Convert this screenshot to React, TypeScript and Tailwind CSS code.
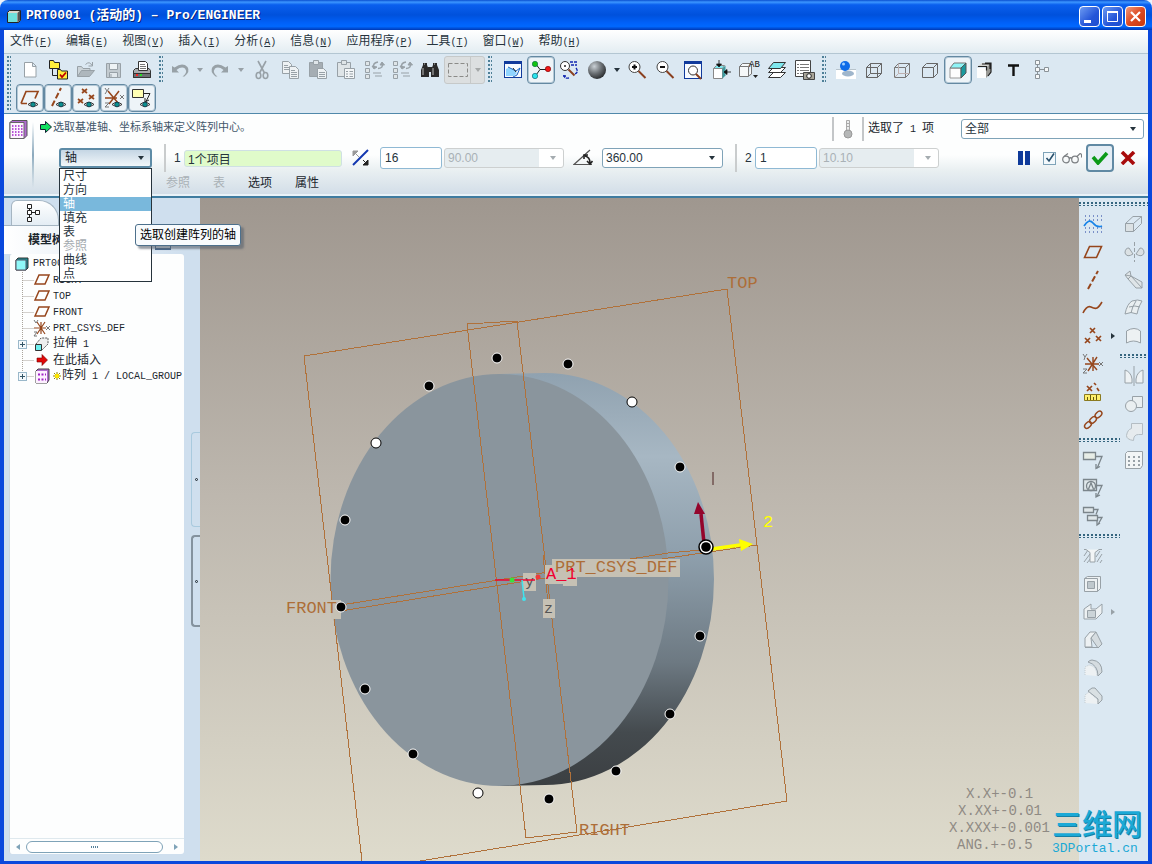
import type { ReactNode } from "react";

const SANS = "font-['Liberation_Sans','Noto_Sans_CJK_SC',sans-serif]";
const MONO = "font-['Liberation_Mono','Noto_Sans_CJK_SC',monospace]";

const G = "#98a1a7";
const BR = "#96461c";

/* ---------- icon drawings, each on a 20 x 20 grid ---------- */

const pencilEye = (
  <g>
    <path d="M8 16.500Q13 12 18 16.500Q13 20 8 16.500Z" fill="#fff" stroke="#333" strokeWidth="1" />
    <circle cx="13" cy="16.500" r="2.400" fill="#0c8f8f" stroke="#123" strokeWidth=".7" />
  </g>
);

const cube = (stroke: string, hidden: ReactNode, fill = "none") => (
  <g stroke={stroke} fill={fill} strokeWidth="1" strokeLinejoin="round">
    <path d="M2.500 7.500h11v10h-11zM2.500 7.500l4-4h11l-4 4M17.500 3.500v10l-4 4" />
    {hidden}
  </g>
);

const icons: Record<string, ReactNode> = {
  newFile: <path d="M4.500 2.500h8l3.500 3.500v11h-11.500zM12.500 2.500v4h3.500" fill="#fff" stroke={G} />,
  workDir: (
    <g stroke="#222">
      <path d="M1.500.5h4l1 2h5v6h-10z" fill="#ffee3c" />
      <path d="M4.500 9v6.500h5" fill="none" />
      <path d="M9.500 9.500h3l1 1.500h6v8h-10z" fill="#ffee3c" />
      <path d="M12 14.500l2 2.500 4-4.500" fill="none" stroke="#c00000" strokeWidth="1.800" />
    </g>
  ),
  open: (
    <g stroke={G} fill="#cbd3d8">
      <path d="M1.500 16.500v-10h4l1.500 2h7v3" />
      <path d="M1.500 16.500l4-6h13l-5 6z" fill="#aeb7bd" />
      <path d="M9.500 4.500q4-4 6.500 1M16.500 2v4h-4" fill="none" />
    </g>
  ),
  save: (
    <g stroke={G} fill="#c3cbd0">
      <path d="M2.500 3.500h14v14h-14z" />
      <path d="M5.500 3.500h8v6h-8z" fill="#eef3f5" />
      <path d="M5.500 12.500h8v5h-8z" fill="#e2e8ec" />
      <path d="M7 14v3" />
    </g>
  ),
  print: (
    <g stroke="#333">
      <path d="M6.500 10V1.500h7l2 2V10" fill="#fff" />
      <path d="M8 4.500h5M8 6.500h6M8 8.500h6" stroke="#777" />
      <path d="M1.500 10.500l2-2h3v2h9v-2h1.500l1.500 2v7h-17z" fill="#a8aaac" />
      <path d="M1.500 13.500h17v4h-17z" fill="#6d7073" />
      <path d="M4 15h2" stroke="#f22" strokeWidth="2" />
      <path d="M8 15h2" stroke="#2d2" strokeWidth="2" />
    </g>
  ),
  undo: <path d="M2 6v6.500h7L6.500 10q5-4 8.500-1.500 3 4-2.500 8h2q6-5 3-9.500-5-5-13 .5z" fill={G} />,
  redo: <path d="M18 6v6.500h-7l2.500-2.500q-5-4-8.500-1.500-3 4 2.500 8h-2q-6-5-3-9.500 5-5 13 .5z" fill={G} />,
  cut: (
    <g fill="none" stroke={G} strokeWidth="1.600">
      <path d="M6 1l6.500 12M14 1L7.500 13" />
      <ellipse cx="6.500" cy="15.500" rx="2.300" ry="3" />
      <ellipse cx="13.500" cy="15.500" rx="2.300" ry="3" />
    </g>
  ),
  copy: (
    <g stroke={G} fill="#eef2f4">
      <path d="M2.500 1.500h6l3 3v9h-9z" />
      <path d="M4 5.500h4M4 7.500h5M4 9.500h5" />
      <path d="M9.500 6.500h6l3 3v9h-9z" />
      <path d="M11 10.500h4M11 12.500h6M11 14.500h6M11 16.500h6" />
    </g>
  ),
  paste: (
    <g stroke={G} fill="#a5adb3">
      <path d="M1.500 2.500h13v14h-13z" />
      <path d="M5.500.5h5v4h-5z" fill="#dfe5e9" />
      <path d="M9.500 8.500h6l3 3v7h-9z" fill="#eef2f4" />
      <path d="M11 12.500h6M11 14.500h6M11 16.500h6" />
    </g>
  ),
  pasteSpecial: (
    <g stroke={G} fill="#dfe5e8">
      <path d="M1.500 2.500h13v14h-13z" />
      <path d="M5.500.5h5v4h-5z" />
      <path d="M8.500 8.500h10v10h-10z" fill="#f3f6f8" />
      <path d="M10 11.500h2M13.500 11.500h3.500M10 14h2M13.500 14h3.500M10 16.500h2M13.500 16.500h3.500" />
    </g>
  ),
  regen: (
    <g stroke={G} fill="none">
      <path d="M1.500 1.500h4v4h-4zM1.500 8.500h4v4h-4zM1.500 14.500h4v4h-4z" fill="#dfe5e8" />
      <path d="M10 8q-2-5 4-6M18 3q2 5-4 5.500" strokeWidth="1.500" />
      <path d="M8 6l2 3 3-2zM16 5l2-3 2.500 3z" fill={G} />
      <path d="M9 13h8M11 16h7" />
    </g>
  ),
  find: (
    <g fill="#2a2a2a">
      <path d="M3 3h4v2l2 5v7H1v-7l2-5zM13 3h4v2l2 5v7h-8v-7l2-5z" />
      <path d="M8 7h4v5H8z" />
      <path d="M3 8v7M13 8v7M4 4h1M14 4h1" stroke="#bbb" />
    </g>
  ),
  selectBox: <path d="M.5 3.500h19v13H.5z" fill="none" stroke="#8b8b88" strokeDasharray="4 2" />,
  repaint: (
    <g>
      <rect x="1" y="1" width="18" height="17" fill="#103a9c" />
      <rect x="2" y="4" width="16" height="13" fill="#f6fbff" />
      <path d="M3 16V9q5-3 11 4l-3 3z" fill="#8fd4ff" />
      <path d="M5 7l8 4 4-3-3 7-4 2" fill="none" stroke="#1864c4" />
      <path d="M10 8l3 4" stroke="#222" />
    </g>
  ),
  datumPoints: (
    <g>
      <path d="M4 3l5 6.500-5 7M9 9.500h8" fill="none" stroke="#222" />
      <circle cx="4" cy="4" r="2.700" fill="#12c312" stroke="#064" strokeWidth=".6" />
      <circle cx="17" cy="9" r="2.700" fill="#f01818" stroke="#700" strokeWidth=".6" />
      <circle cx="4" cy="16" r="2.700" fill="#2ce4ec" stroke="#056" strokeWidth=".6" />
    </g>
  ),
  orient: (
    <g fill="none">
      <circle cx="6" cy="6" r="4.500" fill="#fff" stroke="#333" />
      <circle cx="6" cy="6" r="1" fill="#222" />
      <path d="M9.500 9.500l6 6" stroke="#8a4020" strokeWidth="2" />
      <path d="M11 2h7M12 5h6M17 8q3 4-1 6M10 18q-5 1-5-3M4 16h3" stroke="#1226b0" strokeWidth="1.300" strokeDasharray="3 1" />
    </g>
  ),
  sphere: <circle cx="10" cy="10" r="9" fill="url(#ball)" />,
  zoomIn: (
    <g fill="none">
      <circle cx="7.500" cy="7" r="5.500" fill="#fff" stroke="#444" />
      <path d="M5 7h5M7.500 4.500v5" stroke="#111" strokeWidth="2" />
      <path d="M11.500 11l7 7" stroke="#8a4020" strokeWidth="2" />
    </g>
  ),
  zoomOut: (
    <g fill="none">
      <circle cx="7.500" cy="7" r="5.500" fill="#fff" stroke="#444" />
      <path d="M5 7h5" stroke="#111" strokeWidth="2" />
      <path d="M11.500 11l7 7" stroke="#8a4020" strokeWidth="2" />
    </g>
  ),
  refit: (
    <g>
      <rect x="1" y="1" width="18" height="18" fill="#103a9c" />
      <rect x="2" y="4" width="16" height="14" fill="#f8fbff" />
      <circle cx="10" cy="10.500" r="4.500" fill="#fff" stroke="#333" />
      <path d="M13 14l5 5" stroke="#8a4020" strokeWidth="2" />
    </g>
  ),
  reorient: (
    <g>
      <path d="M2.500 8.500h9v10h-9z" fill="#fff" stroke="#888" />
      <path d="M2.500 8.500l3-3h8l-2 3z" fill="#7fe8ee" stroke="#888" />
      <path d="M11.500 8.500l3-3v10l-3 3z" fill="#3e9a9e" />
      <path d="M8 0v6M5.500 4L8 7l2.500-3zM20 12h-6M16 9.500L13 12l3 2.500z" stroke="#111" strokeWidth=".8" fill="#111" />
    </g>
  ),
  savedView: (
    <g>
      <path d="M.5 6.500h9v10h-9zM.5 6.500l3-3h8l-2 3M12.500 4v10l-3 2" fill="#f6f8f9" stroke="#777" />
      <path d="M14 15h5l-2.500 3z" fill="#222" />
      <text x="10" y="7" fontSize="9" fontFamily="Liberation Mono" fill="#111">AB</text>
    </g>
  ),
  layers: (
    <g stroke="#333">
      <path d="M1.500 17.500l5-5h12l-5 5z" fill="#fff" />
      <path d="M1.500 12.500l5-5h12l-5 5z" fill="#fff" />
      <path d="M1.500 8.500l5-6h12l-5 6z" fill="#7fe8ee" />
    </g>
  ),
  viewMgr: (
    <g stroke="#444">
      <path d="M.5.500h15v16H.5z" fill="#fff" />
      <path d="M2 4.500h2M5 4.500h9M2 7.500h2M5 7.500h9M2 10.500h2M5 10.500h9M2 13.500h2M5 13.500h5" stroke="#777" />
      <path d="M8.500 12.500h11v7h-11z" fill="#a8a498" />
      <circle cx="14" cy="16" r="2.300" fill="#fff" stroke="#222" />
    </g>
  ),
  spin: (
    <g>
      <rect y="9" width="20" height="10" fill="#fff" />
      <path d="M0 9.500h20" stroke="#b8c4cc" />
      <ellipse cx="12" cy="13.500" rx="6" ry="3" fill="#9fb6cc" />
      <circle cx="9" cy="6" r="5" fill="#0d6be8" />
      <circle cx="7.500" cy="4" r="1.500" fill="#9fd0ff" />
    </g>
  ),
  wire: cube("#666", <path d="M6.500 3.500v10h11M6.500 13.500l-4 4" />),
  hidden: cube("#777", <path d="M6.500 3.500v10h11M6.500 13.500l-4 4" stroke="#bdb0b0" />),
  noHidden: cube("#666", null),
  shaded: (
    <g>
      <path d="M2 8h11v10H2z" fill="#fdfdfd" stroke="#999" />
      <path d="M2 8l4-5h12l-5 5z" fill="#8ff4f6" stroke="#777" />
      <path d="M13 8l5-5v10l-5 5z" fill="#1b9a9e" stroke="#555" />
    </g>
  ),
  enhanced: (
    <g>
      <path d="M1 8h9v10H1z" fill="#fdfdfd" />
      <path d="M1 7l5-4h9l-4 4z" fill="#d4d4d0" />
      <path d="M10 8l5-5v10l-5 5z" fill="#9a9a96" />
      <path d="M2 6.500h8.500v4M6 4h8v5M9 3h6v9l-3 4" fill="none" stroke="#222" strokeWidth="1.200" />
    </g>
  ),
  textT: <path d="M4 5.500h11M9.500 5.500V16" stroke="#111" strokeWidth="2.400" fill="none" />,
  treeIcon: (
    <g stroke="#8a9298" fill="#f6f8f9">
      <path d="M5.500 5v10M5.500 9.500h8" />
      <path d="M3.500.5h4v4h-4zM3.500 7.500h4v4h-4zM3.500 14.500h4v4h-4zM12.500 7.500h4v4h-4z" />
    </g>
  ),
  eyePlane: (
    <g>
      <path d="M1 15.500L6 3.500h12l-3 7M1 15.500h6" fill="none" stroke={BR} strokeWidth="1.700" />
      {pencilEye}
    </g>
  ),
  eyeAxis: (
    <g>
      <path d="M4 18L13 0" stroke={BR} strokeWidth="2" strokeDasharray="6 2.500" />
      {pencilEye}
    </g>
  ),
  eyePoint: (
    <g>
      <path d="M6 1l5 4M11 1L6 5M2 11l5 4M7 11l-5 4M13 7l5 4M18 7l-5 4" stroke={BR} strokeWidth="1.700" />
      {pencilEye}
    </g>
  ),
  eyeCsys: (
    <g>
      <path d="M4 3l10 12M15 3L5 16M1 10h12" stroke={BR} strokeWidth="1.500" />
      <path d="M1 0l2 3 2-3M3 3l-2 3M16 7l4 4M20 7l-4 4M1 15h4l-4 4h4" stroke="#777" fill="none" />
      {pencilEye}
    </g>
  ),
  eyeNote: (
    <g>
      <path d="M.5 1.500h11v8H.5z" fill="#ffffb4" stroke="#333" />
      <path d="M12 5.500h6l-4 8M13 10v4l4-2" fill="none" stroke="#222" />
      {pencilEye}
    </g>
  ),
  sketch: (
    <g>
      <path d="M2 2h17M2 6h17M2 14h17M2 18h17" stroke="#18379c" strokeDasharray="1 3" />
      <path d="M1 12q5-8 9-3t9 3" fill="none" stroke="#1683e8" strokeWidth="1.700" />
    </g>
  ),
  plane: <path d="M1.500 15.500l5-11h12l-5 11z" fill="none" stroke={BR} strokeWidth="1.600" />,
  axis: <path d="M5 19L15 1" stroke={BR} strokeWidth="2" strokeDasharray="6 2.500" />,
  curve: <path d="M0 15q4-8 8-6t6 1 5-6" fill="none" stroke={BR} strokeWidth="1.600" />,
  points: <path d="M7 2l5 5M12 2L7 7M2 12l5 5M7 12l-5 5M13 10l5 5M18 10l-5 5" stroke={BR} strokeWidth="1.700" />,
  csys: (
    <g>
      <path d="M4 4l10 12M14 3L5 17M2 10h14M10 3v14" stroke={BR} strokeWidth="1.400" />
      <path d="M0 0l2 3 2-3M2 3L1 6M16 8l4 4M20 8l-4 4M0 15h4l-4 4h4" stroke="#777" fill="none" />
    </g>
  ),
  analysis: (
    <g>
      <path d="M4 4l5 5M9 4L4 9M11 1l2 2M14 6l2 3" stroke={BR} strokeWidth="1.700" />
      <path d="M1.500 12.500h16v6h-16z" fill="#ffef6a" stroke="#8a7a20" />
      <path d="M4.500 15v3M7.500 13v5M10.500 15v3M13.500 13v5" stroke="#665a10" />
    </g>
  ),
  chain: (
    <g fill="none" stroke={BR} strokeWidth="1.500">
      <ellipse cx="5" cy="15" rx="4" ry="2.500" transform="rotate(-45 5 15)" />
      <ellipse cx="10" cy="10" rx="4" ry="2.500" transform="rotate(-45 10 10)" />
      <ellipse cx="15.500" cy="4.500" rx="4" ry="2.500" transform="rotate(-45 15.500 4.500)" />
    </g>
  ),
  note: (
    <g fill="none" stroke="#7b858b" strokeWidth="1.300">
      <path d="M.5 2.500h12v7H.5z" fill="#e6ece6" />
      <path d="M13 6.500h6l-5 12M13 14v4.500l4-2" />
    </g>
  ),
  noteA: (
    <g fill="none" stroke="#7b858b" strokeWidth="1.300">
      <path d="M.5 1.500h13v11H.5z" fill="#dfe7ea" />
      <circle cx="8" cy="8" r="4.500" />
      <path d="M5.500 11L8 5l2.500 6M14 7.500h5l-5 11M13 15v4l4-2" />
    </g>
  ),
  note2: (
    <g fill="none" stroke="#7b858b" strokeWidth="1.300">
      <path d="M.5 1.500h10v5H.5zM4.500 9.500h10v5h-10z" fill="#dfe7ea" />
      <path d="M11 3.500h4l-2 5M15 11.500h4l-4 7M14 15v4l3-2" />
    </g>
  ),
  extrude: (
    <g stroke={G} fill="#dbe1e4">
      <path d="M1.500 9.500h8v8h-8z" />
      <path d="M1.500 9.500L9 2.500h8.500v7l-8 8M9.500 9.500l8-7" fill="none" />
    </g>
  ),
  revolve: (
    <g stroke={G} fill="#dbe1e4">
      <path d="M10.500 0v20" strokeDasharray="4 2" />
      <path d="M9 12L5 6Q1 6 1 11q2 5 8 1zM12 12l4-6q4 0 4 5-2 5-8 1z" />
    </g>
  ),
  sweep: (
    <g stroke={G}>
      <path d="M1 5l5-4 1 5 11 6v6h-6L4 9z" fill="#dfe5e8" />
      <path d="M1 5l6 1 11 12M7 6L4 9" fill="none" />
    </g>
  ),
  surface: <path d="M1 16Q3 6 8 3q6-2 10 0-4 6-5 13-6-3-12 0zM5 9q6-2 11 0M12 3q-4 6-5 12" fill="#eaeff1" stroke={G} />,
  style: <path d="M2.500 17V5q8-5 14 0v12q-7-4-14 0z" fill="#edf1f3" stroke={G} />,
  mirror: <path d="M1 17V4q6 2 7 9v4zM19 17V4q-6 2-7 9v4zM10 0v20" fill="#eef2f4" stroke={G} />,
  merge: (
    <g stroke={G} fill="#eaeff1">
      <path d="M8.500 2.500h10v11h-10z" />
      <circle cx="7" cy="12" r="5.500" />
    </g>
  ),
  trim: <path d="M7.500 1.500h11v11h-4q-5 0-5 6-7-1-7-5 1-6 5-7z" fill="#e6ebee" stroke="#b4bdc3" />,
  pattern: (
    <g>
      <path d="M1.500 3.500l2-2h15v14l-2 3h-15z" fill="#f2f5f6" stroke={G} />
      <path d="M4 7h12M4 11h12M4 15h12" stroke={G} strokeWidth="2" strokeDasharray="2 3" />
    </g>
  ),
  hole: (
    <g stroke={G}>
      <path d="M1 16l6-8M4 17l4-5M1 10l4-6M14 16l5-8M13 11l4-6M17 17l2-3" />
      <path d="M1 3.500h2l4 3V16h5V6.500l4-3h3" fill="#f2f5f6" />
    </g>
  ),
  shell: (
    <g stroke={G} fill="#edf1f3">
      <path d="M1.500 4.500l3-2h13v12l-3 3h-13zM1.500 4.500h13v13" />
      <path d="M4.500 7.500h7v7h-7z" fill="#bfc8cd" />
    </g>
  ),
  rib: (
    <g stroke={G} fill="#edf1f3">
      <path d="M1 17V7l7-5v5h5l6-5v9l-6 6z" />
      <path d="M4.500 8.500h8v7h-8z" fill="#ccd4d8" />
    </g>
  ),
  draft: (
    <g stroke={G}>
      <path d="M2 17V8l5-6h6L8 8l1 9z" fill="#edf1f3" />
      <path d="M8 8l5-6 6 12-4 4z" fill="#d5dce0" />
      <path d="M2 17.500h13" />
    </g>
  ),
  round: (
    <g>
      <path d="M2 17V9l4-2q8 1 8 11" fill="#edf1f3" stroke="#c3ccd1" strokeDasharray="1 1" />
      <path d="M5 4q2-2 4-2 10 1 10 12l-4 4q0-11-10-14z" fill="#d5dce0" stroke={G} />
    </g>
  ),
  chamfer: (
    <g>
      <path d="M2 17V9l4-3 9 8v4" fill="#edf1f3" stroke="#c3ccd1" strokeDasharray="1 1" />
      <path d="M5 5l4-3h3l7 8v4l-4 4v-5z" fill="#d9e0e3" stroke={G} />
    </g>
  ),
};

function Icon({ name, className = "size-5" }: { name: string; className?: string }) {
  return (
    <svg viewBox="0 0 20 20" className={`${className} shrink-0 overflow-visible`} aria-hidden="true">
      {icons[name]}
    </svg>
  );
}

function Caret({ className = "text-[#26333c]" }: { className?: string }) {
  return (
    <svg viewBox="0 0 6 4" className={`h-1 w-1.5 shrink-0 ${className}`} aria-hidden="true">
      <path d="M0 0h6L3 4z" fill="currentColor" />
    </svg>
  );
}

/* Latin runs are set in a narrow monospaced face beside the 12px Chinese text. */
function Mixed({ children }: { children: string }) {
  return (
    <>
      {children.split(/([\x20-\x7e]+)/).map((part, i) =>
        i % 2 ? (
          <span key={i} className="font-['Liberation_Mono',monospace] text-[10px] whitespace-pre">{part}</span>
        ) : (
          part
        ),
      )}
    </>
  );
}

function ToolButton({ name, label, on = false }: { name: string; label: string; on?: boolean }) {
  return (
    <button
      type="button"
      aria-label={label}
      className={`flex size-7 shrink-0 items-center justify-center rounded-[4px] ${
        on ? "border border-[#6489a2] bg-[#eef4f8] shadow-[inset_0_0_0_1px_#b4c8d6]" : ""
      }`}
    >
      <Icon name={name} />
    </button>
  );
}

function Grip({ tall = false }: { tall?: boolean }) {
  return (
    <span
      className={`mx-[3px] w-1 shrink-0 bg-[radial-gradient(circle_at_1px_1px,#4f8098_1px,transparent_1px)] bg-[size:3px_4px] ${
        tall ? "h-14" : "h-7"
      }`}
    />
  );
}

function HGrip() {
  return (
    <div className="flex h-3 items-center">
      <span className="h-1 w-full bg-[radial-gradient(circle_at_1px_1px,#35657f_1px,transparent_1px)] bg-[size:4px_3px]" />
    </div>
  );
}

/* ---------- title, menu and tool bars ---------- */

function TitleBar() {
  return (
    <header className="flex h-[30px] shrink-0 items-center justify-between rounded-t-lg bg-[linear-gradient(#0a4fd0_0%,#3c96ff_7%,#0a5fee_16%,#0051dc_50%,#0060f8_75%,#0068ff_88%,#0038b4_100%)] pr-[6px] pl-[7px]">
      <div className="flex items-center gap-[5px] pt-[2px]">
        <svg viewBox="0 0 14 13" className="h-[13px] w-3.5" aria-hidden="true">
          <path d="M.5 2.500l2-2h11v10l-2 2H.5z" fill="#d8d4cc" stroke="#222" />
          <path d="M1 3h9v9H1z" fill="#6fe0dc" />
          <path d="M10.500 3l2.500-2.500v10l-2.500 2z" fill="#555" />
        </svg>
        <h1 className={`${MONO} text-[13px] leading-[18px] font-bold whitespace-pre text-white [text-shadow:1px_1px_0_#04247c]`}>
          PRT0001 (活动的) – Pro/ENGINEER
        </h1>
      </div>
      <div className="flex gap-[2px] pt-[3px]">
        <button type="button" aria-label="最小化" className="size-[21px] rounded-[4px] border border-white bg-[linear-gradient(135deg,#6d9bf2,#2455d8_60%,#1e4fd0)]">
          <svg viewBox="0 0 19 19" aria-hidden="true"><path d="M4 13h7v3H4z" fill="#fff" /></svg>
        </button>
        <button type="button" aria-label="最大化" className="size-[21px] rounded-[4px] border border-white bg-[linear-gradient(135deg,#6d9bf2,#2455d8_60%,#1e4fd0)]">
          <svg viewBox="0 0 19 19" aria-hidden="true"><path d="M4.500 5h10v9.500h-10zM4 5h11" fill="none" stroke="#fff" /><path d="M4 4h11v2H4z" fill="#fff" /></svg>
        </button>
        <button type="button" aria-label="关闭" className="size-[21px] rounded-[4px] border border-white bg-[linear-gradient(135deg,#f09a7c,#dd4a22_50%,#c8380e)]">
          <svg viewBox="0 0 19 19" aria-hidden="true"><path d="M5 5l9 9M14 5l-9 9" stroke="#fff" strokeWidth="2.200" /></svg>
        </button>
      </div>
    </header>
  );
}

const menus = [
  ["文件", "F"], ["编辑", "E"], ["视图", "V"], ["插入", "I"], ["分析", "A"],
  ["信息", "N"], ["应用程序", "P"], ["工具", "T"], ["窗口", "W"], ["帮助", "H"],
];

function MenuBar() {
  return (
    <nav className="flex h-6 shrink-0 items-center gap-3.5 border-b border-[#b3c6d2] bg-gradient-to-b from-white to-[#e3edf2] px-[6px]">
      {menus.map(([label, key]) => (
        <button key={key} type="button" className="text-xs leading-4 whitespace-nowrap text-[#26333c]">
          {label}
          <span className="font-['Liberation_Mono',monospace] text-[10px]">(<u>{key}</u>)</span>
        </button>
      ))}
    </nav>
  );
}

function ToolBars() {
  return (
    <div className="flex shrink-0 border-b border-[#5088aa] bg-[#dbe8f2] pt-[2px] pb-px">
      <Grip tall />
      <div className="pl-[2px]">
        <div className="flex">
          <ToolButton name="newFile" label="新建" />
          <ToolButton name="workDir" label="工作目录" />
          <ToolButton name="open" label="打开" />
          <ToolButton name="save" label="保存" />
          <ToolButton name="print" label="打印" />
          <Grip />
          <ToolButton name="undo" label="撤消" />
          <button type="button" aria-label="撤消列表" className="flex w-3 items-center justify-center"><Caret className="text-[#98a1a7]" /></button>
          <ToolButton name="redo" label="重做" />
          <button type="button" aria-label="重做列表" className="flex w-3.5 items-center justify-center"><Caret className="text-[#98a1a7]" /></button>
          <ToolButton name="cut" label="剪切" />
          <ToolButton name="copy" label="复制" />
          <ToolButton name="paste" label="粘贴" />
          <ToolButton name="pasteSpecial" label="选择性粘贴" />
          <ToolButton name="regen" label="再生" />
          <ToolButton name="regen" label="再生管理器" />
          <ToolButton name="find" label="查找" />
          <div className="flex h-7 w-[41px] rounded-[3px] border border-[#c6c9c9] bg-[#dcdfe0]">
            <button type="button" aria-label="选取框" className="flex w-[26px] items-center justify-center border-r border-[#c6c9c9]"><Icon name="selectBox" /></button>
            <button type="button" aria-label="选取方式" className="flex flex-1 items-center justify-center"><Caret className="text-[#a5a8a8]" /></button>
          </div>
          <Grip />
          <span className="w-1" />
          <ToolButton name="repaint" label="重画" />
          <ToolButton name="datumPoints" label="旋转中心" on />
          <ToolButton name="orient" label="定向模式" />
          <ToolButton name="sphere" label="外观库" />
          <button type="button" aria-label="外观列表" className="flex w-3 items-center justify-center"><Caret /></button>
          <ToolButton name="zoomIn" label="放大" />
          <ToolButton name="zoomOut" label="缩小" />
          <ToolButton name="refit" label="重新调整" />
          <ToolButton name="reorient" label="重定向" />
          <ToolButton name="savedView" label="保存的视图" />
          <ToolButton name="layers" label="层" />
          <ToolButton name="viewMgr" label="视图管理器" />
          <Grip />
          <span className="w-[3px]" />
          <ToolButton name="spin" label="增强的真实感" />
          <ToolButton name="wire" label="线框" />
          <ToolButton name="hidden" label="隐藏线" />
          <ToolButton name="noHidden" label="消隐" />
          <ToolButton name="shaded" label="着色" on />
          <ToolButton name="enhanced" label="真实感" />
          <ToolButton name="textT" label="注释" />
          <ToolButton name="treeIcon" label="模型树" />
        </div>
        <div className="flex">
          <ToolButton name="eyePlane" label="平面显示" on />
          <ToolButton name="eyeAxis" label="轴显示" on />
          <ToolButton name="eyePoint" label="点显示" on />
          <ToolButton name="eyeCsys" label="坐标系显示" on />
          <ToolButton name="eyeNote" label="注释显示" on />
        </div>
      </div>
    </div>
  );
}

/* ---------- pattern dashboard ---------- */

function Combo({ label, value, className, disabled = false }: { label: string; value: string; className: string; disabled?: boolean }) {
  return (
    <span className={`grid shrink-0 items-center ${className}`}>
      <select
        aria-label={label}
        disabled={disabled}
        className={`h-5 w-full appearance-none rounded-[3px] border pl-[3px] text-xs leading-4 [grid-area:1/1] ${
          disabled
            ? "border-[#cdd0d0] bg-[linear-gradient(90deg,#e6edf0_80%,#fff_80%)] text-[#a9b1b6] opacity-100"
            : "border-[#7fa3b8] bg-white text-[#26333c]"
        }`}
      >
        <option>{value}</option>
      </select>
      <Caret className={`mr-2 justify-self-end [grid-area:1/1] ${disabled ? "text-[#a5acb0]" : "text-[#26333c]"}`} />
    </span>
  );
}

const types = ["尺寸", "方向", "轴", "填充", "表", "参照", "曲线", "点"];

function TypePicker() {
  return (
    <div className="relative w-[93px] shrink-0">
      <button
        type="button"
        aria-haspopup="listbox"
        aria-expanded="true"
        className="flex h-5 w-full items-center justify-between rounded-[3px] border-2 border-[#5d8ba6] bg-gradient-to-b from-[#c5d6e4] to-[#f2f7fa] pr-[6px] pl-1 text-xs leading-4 text-[#1b262d]"
      >
        轴
        <Caret />
      </button>
      <ul role="listbox" aria-label="阵列类型" className="absolute top-5 left-0 z-20 w-full border border-[#26333c] bg-white text-xs leading-[14px]">
        {types.map((t) => (
          <li
            key={t}
            role="option"
            aria-selected={t === "轴"}
            className={`pl-[3px] ${t === "轴" ? "bg-[#79b8dc] text-white" : t === "参照" ? "text-[#a5acb0]" : "text-[#26333c]"}`}
          >
            {t}
          </li>
        ))}
      </ul>
      <div role="tooltip" className="absolute top-[76px] left-[76px] z-30 rounded-[3px] border border-[#4d708c] bg-[#f8fbfd] px-1 py-[2px] text-xs leading-4 whitespace-nowrap text-black shadow-[3px_3px_2px_#5b6470a0]">
        选取创建阵列的轴
      </div>
    </div>
  );
}

function Dashboard() {
  return (
    <section className="flex shrink-0 border-b-2 border-[#3f7ca0] bg-[linear-gradient(#fdfefe_50%,#eaf0f2_68%,#d3dee8_97%,#e9f2f8_97%)]">
      <div className="flex w-7 shrink-0 justify-center pt-[6px]">
        <svg viewBox="0 0 19 19" className="size-[19px]" aria-hidden="true">
          <path d="M1 2.500L3 .5h15v15l-3 3H1z" fill="#b06ad0" stroke="#555" />
          <path d="M1 2.500h14v16H1z" fill="#fdf4ff" stroke="#666" />
          <path d="M3 6h11M3 9h11M3 12h11M3 15h11" stroke="#a020c8" strokeWidth="1.500" strokeDasharray="1.500 1.500" />
        </svg>
      </div>
      <span className="my-2 mr-[6px] w-[2px] shrink-0 bg-gradient-to-b from-transparent via-[#8ba9bd] to-transparent" />
      <div className="min-w-0 flex-1">
        <div className="flex h-[30px] items-center pr-1">
          <svg viewBox="0 0 12 12" className="mb-1 size-3" aria-hidden="true">
            <path d="M.5 3.500h5v-3L11.500 6l-6 5.500v-3h-5z" fill="#10e060" stroke="#123" />
          </svg>
          <p className="mb-1 pl-px text-[11px] leading-4 whitespace-nowrap text-[#42566a]">选取基准轴、坐标系轴来定义阵列中心。</p>
          <div className="ml-auto flex items-center">
            <span className="h-6 w-[2px] bg-[#c3c6c8]" />
            <svg viewBox="0 0 10 20" className="mx-[9px] h-5 w-2.5" aria-hidden="true">
              <path d="M3.500 1.500h3v10h-3z" fill="#eceeee" stroke="#aaa" />
              <path d="M3 4.500h4M3 7.500h4" stroke="#aaa" />
              <circle cx="5" cy="15" r="4" fill="#b5b7b7" stroke="#999" />
            </svg>
            <span className="h-6 w-[2px] bg-[#c3c6c8]" />
            <p className="w-[97px] pl-1 text-xs leading-4 whitespace-nowrap text-[#1b262d]"><Mixed>选取了 1 项</Mixed></p>
            <Combo label="过滤器" value="全部" className="w-[183px]" />
          </div>
        </div>
        <div className="flex h-7 items-center pr-3 pl-[19px] text-xs leading-4 text-[#26333c]">
          <TypePicker />
          <span className="ml-3 h-7 w-[2px] shrink-0 bg-[#c9cccd]" />
          <label htmlFor="dir1" className="ml-2 w-[10px]">1</label>
          <input id="dir1" readOnly defaultValue="1个项目" className="h-[17px] w-[158px] rounded-[3px] border border-[#cfe0e4] bg-[#e0fbca] px-[3px] text-xs leading-4" />
          <button type="button" aria-label="反向" className="mx-[9px] w-5 shrink-0">
            <svg viewBox="0 0 20 20" className="size-5" aria-hidden="true">
              <path d="M2 17L17 2" stroke="#1237b0" strokeWidth="2" />
              <path d="M2 3h5L2 8zM3 4l5 5" fill="#999" stroke="#999" />
              <path d="M17 17h-5l5-5zM16 16l-4-4" fill="#222" stroke="#222" />
            </svg>
          </button>
          <input
            aria-label="成员数"
            defaultValue="16"
            className="h-[22px] w-[62px] shrink-0 rounded-[3px] border border-[#8fb9d4] bg-white px-1 text-xs leading-4"
          />
          <span className="w-[2px] shrink-0" />
          <Combo label="成员间角度" value="90.00" className="w-[120px]" disabled />
          <button type="button" aria-label="角度范围" className="mx-[9px] w-5 shrink-0">
            <svg viewBox="0 0 20 20" className="size-5" aria-hidden="true">
              <path d="M17 2L1 16.500h18" fill="none" stroke="#555" strokeWidth="1.200" />
              <path d="M12 8q5 1 5 7M11 11V7h4M14 13l3 3 2.500-3" fill="none" stroke="#222" strokeWidth="1.600" />
            </svg>
          </button>
          <Combo label="总角度" value="360.00" className="w-[121px]" />
          <span className="ml-3 h-7 w-[2px] shrink-0 bg-[#c9cccd]" />
          <label htmlFor="dir2" className="ml-2 w-[10px]">2</label>
          <input
            id="dir2"
            defaultValue="1"
            className="h-[22px] w-[62px] shrink-0 rounded-[3px] border border-[#8fb9d4] bg-white px-1 text-xs leading-4"
          />
          <span className="w-[2px] shrink-0" />
          <Combo label="径向间距" value="10.10" className="w-[120px]" disabled />
          <div className="ml-auto flex shrink-0 items-center">
            <button type="button" aria-label="暂停">
              <svg viewBox="0 0 12 14" className="h-3.5 w-3" aria-hidden="true"><path d="M0 0h5v14H0zM7 0h5v14H7z" fill="#0f3a9a" /></svg>
            </button>
            <span className="ml-[13px] grid size-[13px] place-items-center">
              <input type="checkbox" defaultChecked aria-label="预览" className="size-[13px] appearance-none border border-[#7fa3b8] bg-[#f4f9fc] [grid-area:1/1]" />
              <svg viewBox="0 0 10 10" className="pointer-events-none size-2.5 [grid-area:1/1]" aria-hidden="true"><path d="M1.500 5l2.500 3 5-7.500" fill="none" stroke="#28506c" strokeWidth="1.600" /></svg>
            </span>
            <svg viewBox="0 0 20 12" className="mr-1 ml-[6px] h-3 w-5" aria-hidden="true">
              <g fill="none" stroke="#7b7f82" strokeWidth="1.200">
                <circle cx="4" cy="7.500" r="3.300" />
                <circle cx="13" cy="7.500" r="3.300" />
                <path d="M7 6.500q1.500-1.500 3 0M2 4.500L6 1.500M15 4.500l3-3q2 0 1.500 4" />
              </g>
            </svg>
            <button type="button" aria-label="确定" className="flex size-7 items-center justify-center rounded-[4px] border-2 border-[#6089a3] bg-[#e4edf4]">
              <svg viewBox="0 0 18 14" className="h-3.5 w-[18px]" aria-hidden="true"><path d="M2 6l5 6L16 2" fill="none" stroke="#0c9a18" strokeWidth="3.600" /></svg>
            </button>
            <button type="button" aria-label="取消" className="ml-[6px]">
              <svg viewBox="0 0 16 14" className="h-3.5 w-4" aria-hidden="true"><path d="M2 1l12 12M14 1L2 13" stroke="#a80c0c" strokeWidth="3.600" /></svg>
            </button>
          </div>
        </div>
        <div className="flex h-6 items-center gap-[23px] pb-[2px] pl-[126px] text-xs leading-4">
          <button type="button" disabled className="text-[#a9b1b6]">参照</button>
          <button type="button" disabled className="text-[#a9b1b6]">表</button>
          <button type="button" className="text-[#1b262d]">选项</button>
          <button type="button" className="text-[#1b262d]">属性</button>
        </div>
      </div>
    </section>
  );
}

/* ---------- model tree ---------- */

const treeGlyphs: Record<string, ReactNode> = {
  plane: <path d="M1 12L5 3h10l-4 9z" fill="none" stroke={BR} strokeWidth="1.500" />,
  csys: (
    <g fill="none">
      <path d="M3 2l8 12M11 2L3 14M0 8h12M7 2v12" stroke={BR} strokeWidth="1.200" />
      <path d="M0 0l2 3 2-3M12 6l4 4M16 6l-4 4M0 12h3l-3 4h3" stroke="#777" />
    </g>
  ),
  extrude: (
    <g>
      <path d="M2 8l5-6h7v6l-6 6" fill="#eee" stroke="#555" strokeDasharray="2 1" />
      <path d="M1.500 8.500h6v6h-6z" fill="#6ff0f0" stroke="#333" />
    </g>
  ),
  insert: <path d="M3 6h5V2.500L13.500 8 8 13.500V10H3z" fill="#e00808" stroke="#700" strokeWidth=".6" />,
  pattern: (
    <g>
      <path d="M2 3l2-2h11v11l-2 3H2z" fill="#b06ad0" stroke="#444" />
      <path d="M2 3h11v12H2z" fill="#fdf0ff" />
      <path d="M4 6.500h8M4 11.500h8" stroke="#a020c8" strokeWidth="2" strokeDasharray="2 1.500" />
    </g>
  ),
};

const treeRows = [
  { glyph: "plane", text: "RIGHT" },
  { glyph: "plane", text: "TOP" },
  { glyph: "plane", text: "FRONT" },
  { glyph: "csys", text: "PRT_CSYS_DEF" },
  { glyph: "extrude", text: "拉伸 1", expand: true },
  { glyph: "insert", text: "在此插入" },
  { glyph: "pattern", text: "阵列 1 / LOCAL_GROUP", expand: true, active: true },
];

function ModelTree() {
  return (
    <aside className="flex w-[196px] shrink-0 bg-[#cfdfee]">
      <div className="flex min-w-0 flex-1 flex-col">
        <div className="flex h-7 shrink-0 items-end border-b border-[#a5b5c2] pl-[7px]">
          <button type="button" aria-label="模型树选项卡" className="flex h-[25px] w-12 items-center justify-center rounded-t-md rounded-tr-[20px] border border-b-0 border-[#a5b5c2] bg-gradient-to-b from-white to-[#e4edf4] pr-1">
            <svg viewBox="0 0 14 20" className="h-5 w-3.5" aria-hidden="true">
              <path d="M3.500 5v10M3.500 9.500h7" stroke="#222" />
              <path d="M1.500 1.500h4v4h-4zM1.500 7.500h4v4h-4zM1.500 14.500h4v4h-4zM9.500 7.500h4v4h-4z" fill="#fff" stroke="#222" />
            </svg>
          </button>
        </div>
        <div className="flex h-7 shrink-0 items-center justify-between bg-gradient-to-r from-white to-[#cfdfee] pr-[13px] pl-6">
          <h2 className="text-xs leading-4 font-bold text-[#1b262d]">模型树</h2>
          <span className="h-[15px] w-4 self-end border border-b-2 border-[#46688c] bg-[#dbe8f2] mb-1" />
        </div>
        <div className="mb-[7px] ml-[5px] flex min-h-0 flex-1 flex-col rounded-[3px] border-l border-[#ccd7df] bg-[#fdfefe]">
          <ul role="tree" className="flex-1 overflow-hidden pt-[2px] text-xs leading-4 text-[#1b262d]">
            <li role="treeitem" className="flex h-4 items-center gap-1 pl-[5px] whitespace-nowrap">
              <svg viewBox="0 0 14 14" className="size-3.5 shrink-0" aria-hidden="true">
                <path d="M1 3l2-2h10v10l-2 2H1z" fill="#178f95" stroke="#333" />
                <path d="M1 3h10v10H1z" fill="#8ff8f8" stroke="#556" />
              </svg>
              <Mixed>PRT0001.PRT</Mixed>
            </li>
            {treeRows.map((r) => (
              <li key={r.text} role="treeitem" className="flex h-4 items-center pl-2 whitespace-nowrap">
                <svg viewBox="0 0 16 16" className="size-4 shrink-0" aria-hidden="true">
                  <path d={r.glyph === "pattern" ? "M4.500 0v8" : "M4.500 0v16"} stroke="#aaa49c" strokeDasharray="1 1" />
                  <path d="M4.500 8.500H16" stroke="#aaa49c" strokeDasharray="1 1" />
                  {r.expand && (
                    <g>
                      <rect x=".5" y="4.500" width="8" height="8" fill="#f4f9fc" stroke="#9ab8ca" />
                      <path d="M2 8.500h5M4.500 6v5" stroke="#356" />
                    </g>
                  )}
                </svg>
                <svg viewBox="0 0 16 16" className="size-4 shrink-0 overflow-visible" aria-hidden="true">{treeGlyphs[r.glyph]}</svg>
                <span className="pl-[3px]">
                  {r.active && (
                    <svg viewBox="0 0 8 8" className="mr-px inline size-2" aria-hidden="true">
                      <path d="M0 4h8M4 0v8M1 1l6 6M7 1L1 7" stroke="#8c8400" />
                      <circle cx="4" cy="4" r="2.300" fill="#ffe800" />
                    </svg>
                  )}
                  <Mixed>{r.text}</Mixed>
                </span>
              </li>
            ))}
          </ul>
          <div className="flex h-4 shrink-0 items-center gap-[6px] border-t border-[#dfe9ee] px-[6px]">
            <button type="button" aria-label="向左滚动"><svg viewBox="0 0 4 6" className="h-1.5 w-1"><path d="M4 0v6L0 3z" fill="#7fa3b8" /></svg></button>
            <span className="flex h-3 w-[137px] items-center justify-center rounded-full border border-[#7fa3b8] bg-white">
              <span className="h-[2px] w-2 bg-[repeating-linear-gradient(90deg,#55809a_0_1px,transparent_1px_2px)]" />
            </span>
            <button type="button" aria-label="向右滚动" className="ml-auto"><svg viewBox="0 0 4 6" className="h-1.5 w-1"><path d="M0 0v6l4-3z" fill="#7fa3b8" /></svg></button>
          </div>
        </div>
      </div>
      <div className="flex w-4 shrink-0 flex-col items-end justify-center gap-2">
        <button type="button" aria-label="展开" className="flex h-[95px] w-[9px] items-center justify-center rounded-l border border-r-0 border-[#a9cade]">
          <span className="size-[3px] rounded-full border border-[#1b262d]" />
        </button>
        <button type="button" aria-label="折叠" className="flex h-[92px] w-[9px] items-center justify-center rounded-l border-2 border-r-0 border-[#84929e]">
          <span className="size-[3px] rounded-full border border-[#1b262d]" />
        </button>
      </div>
    </aside>
  );
}

/* ---------- model view ---------- */

const filled = [
  [497, 358], [568, 364], [429, 386], [680, 467], [345, 520], [341, 607], [700, 636],
  [365, 689], [670, 714], [413, 754], [616, 771], [549, 799],
];
const hollow = [[632, 402], [376, 443], [478, 793]];

function Viewport() {
  return (
    <main className="min-h-0 min-w-0 flex-1 bg-[linear-gradient(#9f978f,#bdb7ae_45%,#dedbcc)]">
      <svg viewBox="200 198 879 663" className="block h-full w-full" role="img" aria-label="零件模型">
        <defs>
          <linearGradient id="rim" x1="0" y1="374" x2="0" y2="786" gradientUnits="userSpaceOnUse">
            <stop offset="0" stopColor="#90a2b0" />
            <stop offset=".2" stopColor="#a7b7c3" />
            <stop offset=".45" stopColor="#8d9eab" />
            <stop offset=".7" stopColor="#6d7982" />
            <stop offset=".87" stopColor="#444a4e" />
            <stop offset="1" stopColor="#3b3f42" />
          </linearGradient>
          <radialGradient id="ball" cx=".35" cy=".3" r=".8">
            <stop offset="0" stopColor="#c9d0d5" />
            <stop offset=".5" stopColor="#6b7074" />
            <stop offset="1" stopColor="#1d1f21" />
          </radialGradient>
        </defs>
        <path d="M499 374L545 373A169 206 0 0 1 545 785L499 786Z" fill="url(#rim)" />
        <ellipse cx="499.500" cy="580" rx="169" ry="206" fill="#8a959d" />
        <g fill="none" stroke="#b0713a" shapeRendering="crispEdges">
          <path d="M362 861L304 356L727 289L787 801L420 861" />
          <path d="M467 324L517 321L577 832L526 838Z" />
          <path d="M341 605L668 553L757 545M341 611L668 558L757 545M543 555l5 48" />
        </g>
        <g fill="#c6c1b4">
          <path d="M552 559h128v18H577v9h-14v-2h-18v-19h7z" />
          <path d="M523 573h13v18h-13zM543 599h12v19h-12zM331 600h10v19h-10z" />
        </g>
        <g fontFamily="Liberation Mono" fontSize="17" fill="#ad6e38">
          <text x="727" y="288">TOP</text>
          <text x="286" y="613">FRONT</text>
          <text x="579" y="835">RIGHT</text>
          <text x="555" y="572">PRT_CSYS_DEF</text>
          <text x="546" y="579" fill="#f00030">A_1</text>
          <text x="525" y="586" fontSize="15" fill="#555">y</text>
          <text x="544" y="613" fontSize="15" fill="#555">z</text>
          <text x="763" y="527" fontSize="17" fill="#ffff00">2</text>
        </g>
        <path d="M713 472v13" stroke="#4a2020" />
        <g>
          <path d="M495 580h40" stroke="#f00030" strokeWidth="1.500" />
          <circle cx="512" cy="580" r="2.500" fill="#3be03b" />
          <circle cx="538" cy="577" r="2.500" fill="#f03a3a" />
          <path d="M522 580l2 18" stroke="#3fe4ee" strokeWidth="1.500" />
          <circle cx="524" cy="599" r="2" fill="#3fe4ee" />
        </g>
        <path d="M704 543l-3-29" stroke="#94052c" strokeWidth="3.500" />
        <path d="M698 502l7 12h-11z" fill="#94052c" />
        <path d="M712 549l28-4" stroke="#ffff00" strokeWidth="3.500" />
        <path d="M753 544l-14-5 2 12z" fill="#ffff00" />
        {filled.map(([x, y]) => (
          <circle key={`${x}-${y}`} cx={x} cy={y} r="5" fill="#000" stroke="#fff" />
        ))}
        {hollow.map(([x, y]) => (
          <circle key={`${x}-${y}`} cx={x} cy={y} r="5" fill="#fff" stroke="#000" />
        ))}
        <circle cx="706" cy="547" r="7" fill="#fff" stroke="#000" strokeWidth="1.500" />
        <circle cx="706" cy="547" r="4.800" fill="#000" />
        <g fontFamily="Liberation Mono" fontSize="14" fill="#8f8a84">
          <text x="966" y="798">X.X+-0.1</text>
          <text x="958" y="815">X.XX+-0.01</text>
          <text x="949" y="832">X.XXX+-0.001</text>
          <text x="957" y="849">ANG.+-0.5</text>
        </g>
      </svg>
    </main>
  );
}

/* ---------- feature tool columns ---------- */

const columnA = [
  ["sketch", "草绘"], ["plane", "平面"], ["axis", "轴"], ["curve", "曲线"], ["points", "点", "dark"], ["csys", "坐标系"],
  ["analysis", "分析"], ["chain", "参照"], ["-", "a"], ["note", "注释"], ["noteA", "几何公差"], ["note2", "传播"], ["-", "b"],
  ["hole", "孔"], ["shell", "壳"], ["rib", "筋", "pale"], ["draft", "拔模"], ["round", "倒圆角"], ["chamfer", "倒角"],
];
const columnB = [
  ["extrude", "拉伸"], ["revolve", "旋转"], ["sweep", "扫描"], ["surface", "边界混合"], ["style", "造型"], ["-", "c"],
  ["mirror", "镜像"], ["merge", "合并"], ["trim", "修剪"], ["pattern", "阵列"],
];

function ToolColumn({ items, className }: { items: string[][]; className: string }) {
  return (
    <div className={className}>
      {items.map(([name, label, flyout]) =>
        name === "-" ? (
          <HGrip key={label} />
        ) : (
          <div key={label} className="flex items-center">
            <ToolButton name={name} label={label} />
            {flyout && (
              <svg viewBox="0 0 4 6" className={`ml-1 h-1.5 w-1 ${flyout === "dark" ? "text-[#26333c]" : "text-[#98a1a7]"}`} aria-hidden="true">
                <path d="M0 0v6l4-3z" fill="currentColor" />
              </svg>
            )}
          </div>
        ),
      )}
    </div>
  );
}

export default function App() {
  return (
    <div className={`${SANS} relative flex h-screen flex-col bg-[#eef3fb]`}>
      <TitleBar />
      <div className="flex min-h-0 flex-1 flex-col border-x-4 border-b-[3px] border-[#0a48dc]">
        <MenuBar />
        <ToolBars />
        <Dashboard />
        <div className="flex min-h-0 flex-1">
          <ModelTree />
          <Viewport />
          <aside className="w-[69px] shrink-0 overflow-hidden bg-[#dbe8f2]">
            <HGrip />
            <div className="flex">
              <ToolColumn items={columnA} className="w-[41px]" />
              <ToolColumn items={columnB} className="w-7" />
            </div>
          </aside>
        </div>
      </div>
      <div className="absolute right-[10px] bottom-[7px] w-[90px] text-[#1ba9d6]">
        <p className="text-[30px] leading-8 font-medium [text-shadow:1px_1px_0_#187fa4]">三维网</p>
        <p className={`${MONO} text-[13px] leading-4`}>3DPortal.cn</p>
      </div>
    </div>
  );
}
